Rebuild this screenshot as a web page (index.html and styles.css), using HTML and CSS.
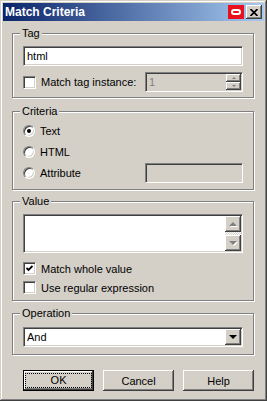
FILE: index.html
```html
<!DOCTYPE html>
<html>
<head>
<meta charset="utf-8">
<title>Match Criteria</title>
<link rel="stylesheet" href="styles.css">
</head>
<body>
<div class="window">
  <div class="titlebar">
    <span class="title">Match Criteria</span>
    <span class="tb-btn tb-red"><span class="pill"></span></span>
    <span class="tb-btn tb-close">
      <svg width="8" height="7" viewBox="0 0 8 7"><path d="M0.5 0 L7.5 7 M7.5 0 L0.5 7" stroke="#000" stroke-width="1.7"/></svg>
    </span>
  </div>

  <div class="content">
    <fieldset class="group group-tag">
      <legend>Tag</legend>
      <div class="field">html</div>
      <div class="row">
        <label class="check"><span class="box"></span>Match tag instance:</label>
        <div class="field field-off field-short">
          <span class="val">1</span>
          <span class="spin">
            <span class="sbtn"><span class="tri tri-up tri-tiny"></span></span>
            <span class="sbtn"><span class="tri tri-down tri-tiny"></span></span>
          </span>
        </div>
      </div>
    </fieldset>

    <fieldset class="group group-criteria">
      <legend>Criteria</legend>
      <div class="radio-row"><label class="radio"><span class="dot on"></span>Text</label></div>
      <div class="radio-row"><label class="radio"><span class="dot"></span>HTML</label></div>
      <div class="radio-row">
        <label class="radio"><span class="dot"></span>Attribute</label>
        <div class="field field-off field-short"></div>
      </div>
    </fieldset>

    <fieldset class="group group-value">
      <legend>Value</legend>
      <div class="field field-area">
        <span class="val"></span>
        <span class="scroll">
          <span class="sbtn sbtn-big"><span class="tri tri-up tri-off"></span></span>
          <span class="track"></span>
          <span class="sbtn sbtn-big"><span class="tri tri-down tri-off"></span></span>
        </span>
      </div>
      <div class="check-row"><label class="check"><span class="box">
        <svg width="7" height="7" viewBox="0 0 7 7"><path d="M0.5 3 L2.5 5 L6.5 1" fill="none" stroke="#000" stroke-width="1.8"/></svg>
      </span>Match whole value</label></div>
      <div class="check-row"><label class="check"><span class="box"></span>Use regular expression</label></div>
    </fieldset>

    <fieldset class="group group-op">
      <legend>Operation</legend>
      <div class="field field-select">
        <span class="val">And</span>
        <span class="sbtn sbtn-drop"><span class="tri tri-down"></span></span>
      </div>
    </fieldset>

    <div class="buttons">
      <button class="btn btn-default"><span class="focus">OK</span></button>
      <button class="btn">Cancel</button>
      <button class="btn">Help</button>
    </div>
  </div>
</div>
</body>
</html>
```

FILE: styles.css
```css
html, body { margin: 0; padding: 0; }

body
{
  font: 11px "Liberation Sans", Arial, sans-serif;
  color: #000;
  background: #d4d0c8;
}

/* window frame */
.window
{
  width: 267px;
  height: 401px;
  box-sizing: border-box;
  padding: 3px;
  background: #d4d0c8;
  box-shadow: inset -1px -1px #404040, inset 1px 1px #d4d0c8,
              inset -2px -2px #808080, inset 2px 2px #fff;
  display: flex;
  flex-direction: column;
}

.titlebar
{
  height: 18px;
  display: flex;
  align-items: center;
  gap: 2px;
  padding: 0 2px;
  background: linear-gradient(to right, #0a246a, #a6caf0);
}
.title
{
  flex: 1;
  color: #fff;
  font-weight: bold;
  font-size: 12px;
}
.tb-btn
{
  width: 16px;
  height: 14px;
  box-sizing: border-box;
  display: flex;
  align-items: center;
  justify-content: center;
}
.tb-red { background: #e8101c; }
.tb-red .pill
{
  width: 10px;
  height: 6px;
  box-sizing: border-box;
  border: 2px solid #fff;
  border-radius: 3px;
}
.tb-close
{
  background: #d4d0c8;
  box-shadow: inset -1px -1px #404040, inset 1px 1px #fff, inset -2px -2px #808080;
}

.content
{
  padding: 0 10px 0 9px;
  display: flex;
  flex-direction: column;
}

/* etched group boxes */
.group
{
  margin: 0;
  padding: 6px 10px 5px;
  min-width: 0;
  border: 1px solid #808080;
  box-shadow: inset 1px 1px #fff, 1px 1px #fff;
}
.group legend
{
  padding: 0 2px;
  margin-left: -3px;
  line-height: 13px;
  background: #d4d0c8;
}
.group-tag { margin-top: 6px; }
.group-criteria { margin-top: 7px; padding-top: 2px; padding-bottom: 6px; }
.group-value { margin-top: 5px; padding-bottom: 3px; }
.group-op { margin-top: 6px; padding-top: 7px; padding-bottom: 7px; }

/* sunken fields */
.field
{
  height: 20px;
  box-sizing: border-box;
  display: flex;
  align-items: center;
  padding: 0 0 0 3px;
  background: #fff;
  border: 1px solid;
  border-color: #808080 #fff #fff #808080;
  box-shadow: inset 1px 1px #404040, inset -1px -1px #d4d0c8;
}
.field .val { flex: 1; }
.field-off { background: #d4d0c8; color: #808080; }
.field-short { width: 98px; }
.field-area { height: 39px; align-items: stretch; }

.row
{
  margin-top: 6px;
  height: 20px;
  display: flex;
  align-items: center;
  justify-content: space-between;
}

.check, .radio { display: flex; align-items: center; gap: 5px; }

.box
{
  width: 13px;
  height: 13px;
  box-sizing: border-box;
  display: flex;
  align-items: center;
  justify-content: center;
  background: #fff;
  border: 1px solid;
  border-color: #808080 #fff #fff #808080;
  box-shadow: inset 1px 1px #404040, inset -1px -1px #d4d0c8;
}

.dot
{
  width: 12px;
  height: 12px;
  box-sizing: border-box;
  border-radius: 50%;
  display: flex;
  align-items: center;
  justify-content: center;
  background: #fff;
  border: 1px solid;
  border-color: #808080 #fff #fff #808080;
  box-shadow: inset 1px 1px #404040, inset -1px -1px #d4d0c8;
}
.dot.on::after
{
  content: "";
  width: 4px;
  height: 4px;
  border-radius: 50%;
  background: #000;
}

.radio-row
{
  height: 21px;
  display: flex;
  align-items: center;
  justify-content: space-between;
}

.check-row { height: 19px; display: flex; align-items: center; }
.field-area + .check-row { margin-top: 6px; }

/* small raised buttons in fields */
.sbtn
{
  flex: 1;
  display: flex;
  align-items: center;
  justify-content: center;
  background: #d4d0c8;
  box-shadow: inset -1px -1px #404040, inset 1px 1px #fff, inset -2px -2px #808080;
}
.spin
{
  width: 15px;
  height: 16px;
  margin: 0 1px 0 auto;
  display: flex;
  flex-direction: column;
}
.scroll
{
  width: 16px;
  margin: 1px 1px 1px auto;
  display: flex;
  flex-direction: column;
}
.sbtn-big { flex: 0 0 16px; }
.track
{
  flex: 1;
  background: conic-gradient(#fff 25%, #d4d0c8 0 50%, #fff 0 75%, #d4d0c8 0) 0 0 / 2px 2px;
}
.sbtn-drop { flex: 0 0 16px; height: 16px; margin-right: 1px; }

.tri { width: 0; height: 0; border-left: 4px solid transparent; border-right: 4px solid transparent; }
.tri-up { border-bottom: 4px solid #000; }
.tri-down { border-top: 4px solid #000; }
.tri-off { filter: drop-shadow(1px 1px 0 #fff); }
.tri-off.tri-up { border-bottom-color: #808080; }
.tri-off.tri-down { border-top-color: #808080; }
.tri-tiny { border-left-width: 2px; border-right-width: 2px; }
.tri-tiny.tri-up { border-bottom: 2px solid #808080; }
.tri-tiny.tri-down { border-top: 2px solid #808080; }

/* dialog buttons */
.buttons
{
  margin-top: 15px;
  padding-left: 11px;
  display: flex;
  gap: 9px;
}
.btn
{
  width: 75px;
  height: 21px;
  padding: 0;
  font: inherit;
  color: #000;
  background: #d4d0c8;
  border: none;
  box-shadow: inset -1px -1px #404040, inset 1px 1px #fff,
              inset -2px -2px #808080, inset 2px 2px #d4d0c8;
}
.btn-default
{
  border: 1px solid #000;
  display: flex;
  align-items: center;
  justify-content: center;
}
.btn-default .focus
{
  width: 65px;
  height: 13px;
  line-height: 13px;
  text-align: center;
  outline: 1px dotted #000;
}
```
